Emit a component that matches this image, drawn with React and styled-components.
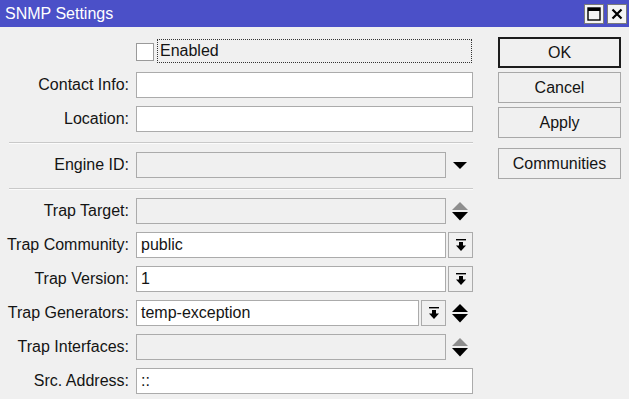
import React from "react";
import styled, { createGlobalStyle } from "styled-components";

const GlobalStyle = createGlobalStyle`
  html, body {
    margin: 0;
    padding: 0;
    background: #f0f0f0;
  }
  body {
    font-family: "Liberation Sans", Arial, sans-serif;
    color: #141414;
  }
`;

const Window = styled.div`
  width: 629px;
  height: 399px;
  background: #f0f0f0;
  overflow: hidden;
  display: flex;
  flex-direction: column;
`;

const TitleBar = styled.div`
  height: 27px;
  flex: none;
  background: #4b50c8;
  display: flex;
  align-items: center;
  padding: 0 2px 0 5px;
  color: #fff;
  font-size: 16px;
`;

const Title = styled.div`
  flex: 1;
`;

const WinButton = styled.div`
  width: 18px;
  height: 18px;
  margin-left: 3px;
  border: 1px solid #7a7a7a;
  background: #f4f4f4;
  display: flex;
  align-items: center;
  justify-content: center;
`;

const Body = styled.div`
  display: flex;
  flex: 1;
`;

const Form = styled.div`
  width: 473px;
  padding-top: 12px;
  display: flex;
  flex-direction: column;
`;

const Row = styled.div`
  display: grid;
  grid-template-columns: 129px 337px;
  column-gap: 7px;
  align-items: center;
  height: ${(p) => (p.$short ? "24px" : "26px")};
  margin-bottom: ${(p) => (p.$short ? "9px" : "8px")};
`;

const Label = styled.div`
  text-align: right;
  font-size: 16px;
  white-space: nowrap;
`;

const Field = styled.div`
  display: flex;
  align-items: center;
  height: 100%;
`;

const Input = styled.div`
  box-sizing: border-box;
  width: ${(p) => p.$w}px;
  height: 26px;
  border: 1px solid #ababab;
  background: ${(p) => (p.$disabled ? "#f0f0f0" : "#fff")};
  font-size: 16px;
  line-height: 24px;
  padding-left: 4px;
  white-space: nowrap;
  overflow: hidden;
`;

const SmallButton = styled.div`
  box-sizing: border-box;
  width: 25px;
  height: 26px;
  margin-left: 2px;
  border: 1px solid #ababab;
  background: #f0f0f0;
  display: flex;
  align-items: center;
  justify-content: center;
`;

const IconSlot = styled.div`
  width: 27px;
  height: 26px;
  display: flex;
  align-items: center;
  justify-content: center;
`;

const Separator = styled.div`
  margin: 2px 0 8px 9px;
  height: 1px;
  background: #c9c9c9;
  border-bottom: 1px solid #fbfbfb;
`;

const CheckRow = styled.div`
  display: flex;
  align-items: flex-start;
  height: 100%;
`;

const CheckBox = styled.div`
  box-sizing: border-box;
  width: 18px;
  height: 18px;
  margin-top: 4px;
  border: 1px solid #9a9a9a;
  background: #fff;
`;

const FocusLabel = styled.div`
  box-sizing: border-box;
  margin-left: 3px;
  width: 315px;
  height: 24px;
  border: 1px dotted #333;
  font-size: 16px;
  line-height: 22px;
  padding-left: 2px;
`;

const Buttons = styled.div`
  margin-left: 25px;
  padding-top: 10px;
  display: flex;
  flex-direction: column;
  gap: 4px;
`;

const Button = styled.div`
  box-sizing: border-box;
  width: 123px;
  height: 31px;
  margin-top: ${(p) => (p.$spaced ? "6px" : "0")};
  border: ${(p) => (p.$default ? "2px solid #1c1c1c" : "1px solid #a8a8a8")};
  background: #f0f0f0;
  display: flex;
  align-items: center;
  justify-content: center;
  font-size: 16px;
`;

const ArrowBottom = () => (
  <svg width="12" height="13" viewBox="0 0 12 13">
    <rect x="1" y="0" width="10" height="1.4" fill="#000" />
    <rect x="4" y="3" width="4" height="4" fill="#000" />
    <polygon points="1,6.5 11,6.5 6,12" fill="#000" />
  </svg>
);

const DropDown = () => (
  <svg width="14" height="7" viewBox="0 0 14 7">
    <polygon points="0,0 14,0 7,7" fill="#000" />
  </svg>
);

const UpDown = ({ upDisabled }) => (
  <svg width="16" height="19" viewBox="0 0 16 19">
    <polygon points="0,8 16,8 8,0" fill={upDisabled ? "#8e8e8e" : "#000"} />
    <polygon points="0,10 16,10 8,18.5" fill="#000" />
  </svg>
);

const MaxIcon = () => (
  <svg width="14" height="14" viewBox="0 0 14 14">
    <rect x="1" y="1" width="12" height="12" fill="none" stroke="#000" strokeWidth="1.4" />
    <rect x="1" y="1" width="12" height="3" fill="#000" />
  </svg>
);

const CloseIcon = () => (
  <svg width="12" height="12" viewBox="0 0 12 12">
    <path d="M1.5 1.5 L10.5 10.5 M10.5 1.5 L1.5 10.5" stroke="#000" strokeWidth="2.2" />
  </svg>
);

const TextRow = ({ label, value, disabled }) => (
  <Row>
    <Label>{label}</Label>
    <Field>
      <Input $w={337} $disabled={disabled}>{value}</Input>
    </Field>
  </Row>
);

export default function App() {
  return (
    <Window>
      <GlobalStyle />
      <TitleBar>
        <Title>SNMP Settings</Title>
        <WinButton>
          <MaxIcon />
        </WinButton>
        <WinButton>
          <CloseIcon />
        </WinButton>
      </TitleBar>
      <Body>
        <Form>
          <Row $short>
            <Label />
            <CheckRow>
              <CheckBox />
              <FocusLabel>Enabled</FocusLabel>
            </CheckRow>
          </Row>
          <TextRow label="Contact Info:" value="" />
          <TextRow label="Location:" value="" />
          <Separator />
          <Row>
            <Label>Engine ID:</Label>
            <Field>
              <Input $w={310} $disabled />
              <IconSlot>
                <DropDown />
              </IconSlot>
            </Field>
          </Row>
          <Separator />
          <Row>
            <Label>Trap Target:</Label>
            <Field>
              <Input $w={310} $disabled />
              <IconSlot>
                <UpDown upDisabled />
              </IconSlot>
            </Field>
          </Row>
          <Row>
            <Label>Trap Community:</Label>
            <Field>
              <Input $w={310}>public</Input>
              <SmallButton>
                <ArrowBottom />
              </SmallButton>
            </Field>
          </Row>
          <Row>
            <Label>Trap Version:</Label>
            <Field>
              <Input $w={310}>1</Input>
              <SmallButton>
                <ArrowBottom />
              </SmallButton>
            </Field>
          </Row>
          <Row>
            <Label>Trap Generators:</Label>
            <Field>
              <Input $w={283}>temp-exception</Input>
              <SmallButton>
                <ArrowBottom />
              </SmallButton>
              <IconSlot>
                <UpDown />
              </IconSlot>
            </Field>
          </Row>
          <Row>
            <Label>Trap Interfaces:</Label>
            <Field>
              <Input $w={310} $disabled />
              <IconSlot>
                <UpDown upDisabled />
              </IconSlot>
            </Field>
          </Row>
          <TextRow label="Src. Address:" value="::" />
        </Form>
        <Buttons>
          <Button $default>OK</Button>
          <Button>Cancel</Button>
          <Button>Apply</Button>
          <Button $spaced>Communities</Button>
        </Buttons>
      </Body>
    </Window>
  );
}
